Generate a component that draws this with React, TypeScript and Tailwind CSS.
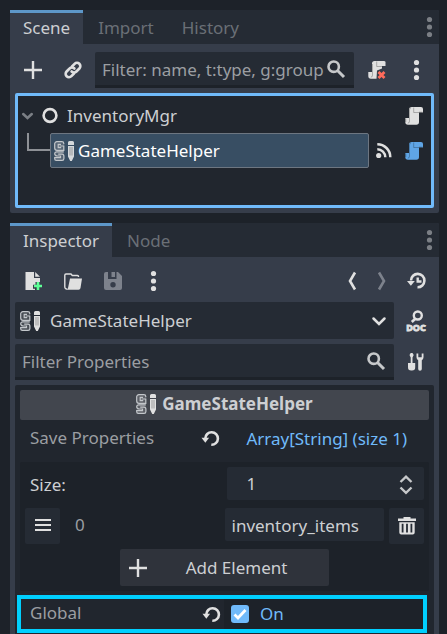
import type { ReactNode } from "react";

type IconProps = { children: ReactNode; className?: string };

function Icon({ children, className = "text-[#e0e0e0]" }: IconProps) {
  return (
    <svg viewBox="0 0 20 20" className={`block h-5 w-5 shrink-0 overflow-visible ${className}`} fill="none" aria-hidden="true">
      {children}
    </svg>
  );
}

const PlusIcon = () => (
  <Icon>
    <path d="M10 1v18M1 10h18" stroke="currentColor" strokeWidth="2.4" />
  </Icon>
);

const LinkIcon = () => (
  <Icon>
    <g stroke="currentColor" strokeWidth="2.6" strokeLinecap="round">
      <path d="M9 6.5l2.6-2.7a3.3 3.3 0 0 1 4.8 4.7l-3 3a3.3 3.3 0 0 1-4.8 0" />
      <path d="M11 13.5l-2.6 2.7a3.3 3.3 0 0 1-4.8-4.7l3-3a3.3 3.3 0 0 1 4.8 0" />
    </g>
  </Icon>
);

const SearchIcon = () => (
  <Icon className="text-[#c6c8ca]">
    <circle cx="7.7" cy="7.7" r="5.2" stroke="currentColor" strokeWidth="2.6" />
    <path d="M11.5 11.5l6.5 6.5" stroke="currentColor" strokeWidth="3" />
  </Icon>
);

const DotsIcon = ({ className }: { className?: string }) => (
  <Icon className={className}>
    <circle cx="10.5" cy="2.5" r="2.6" fill="currentColor" />
    <circle cx="10.5" cy="10" r="2.6" fill="currentColor" />
    <circle cx="10.5" cy="17.5" r="2.6" fill="currentColor" />
  </Icon>
);

const ScriptIcon = ({ className }: { className?: string }) => (
  <Icon className={className}>
    <path
      d="M7.5 1H17a2 2 0 0 1 2 2v3.5h-4V16a2.7 2.7 0 0 1-2.7 2.7H4A2.7 2.7 0 0 1 1.3 16v-4H5V3.5A2.5 2.5 0 0 1 7.5 1z"
      fill="currentColor"
    />
    <path
      d="M9.7 1.5v5H15M7.2 1.5A2.5 2.5 0 0 0 5.5 4v11a2 2 0 0 1-1.7 2.2M1.8 12.5V16M15 6.2h3.6"
      stroke="#000"
      strokeOpacity="0.25"
    />
  </Icon>
);

const ScriptRemoveIcon = () => (
  <Icon>
    <path
      d="M8.5 1H18a1.500 1.500 0 0 1 1.500 2v3H16v2.500l-5 2-.5 8.200H5A2.700 2.700 0 0 1 2.300 16v-4H6V3.500A2.500 2.500 0 0 1 8.500 1z"
      fill="currentColor"
    />
    <path d="M10.700 1.500v5H16M6.500 4v11a2 2 0 0 1-1.700 2.200" stroke="#000" strokeOpacity="0.25" />
    <path d="M12.500 12l6 6M18.500 12l-6 6" stroke="#ff6b5b" strokeWidth="2.8" />
  </Icon>
);

const NodeIcon = () => (
  <Icon>
    <circle cx="10" cy="9.500" r="6.400" stroke="currentColor" strokeWidth="2.600" />
  </Icon>
);

const SignalIcon = () => (
  <Icon>
    <circle cx="4.700" cy="14.500" r="2.600" fill="currentColor" />
    <path d="M3.300 8.200a8 8 0 0 1 8 8M3.300 3.200a13 13 0 0 1 13 13" stroke="currentColor" strokeWidth="2.500" />
  </Icon>
);

const HelperIcon = ({ className = "text-[#e0e0e0]" }: { className?: string }) => (
  <Icon className={className}>
    <rect x="0.500" y="0.500" width="9.500" height="9" rx="2.500" fill="#8b9096" fillOpacity="0.350" />
    <rect x="0.500" y="10.500" width="9.500" height="9" rx="2.500" fill="#8b9096" fillOpacity="0.350" />
    <g stroke="#c3c7cb" strokeWidth="1.200">
      <path d="M9.800 3.200V2.500a2 2 0 0 0-2-1.900H3A2.300 2.300 0 0 0 .7 3v4A2.300 2.300 0 0 0 3 9.300h6.800V5H5.500" />
      <path d="M7 3.300H4.200v3.300h3" />
      <path d="M9.800 10.800H3a2 2 0 0 0-2.300 2c0 1.500 1 2 2.300 2.200h3.500v1.600H.7v1.200A1.600 1.600 0 0 0 2.300 19.400H8a2 2 0 0 0 1.900-2v-2.200a2 2 0 0 0-2-2H4.200" />
    </g>
    <path d="M14 1.500A1.500 1.500 0 0 1 15.500 0h3A1.500 1.500 0 0 1 20 1.500V4h-6zM14 5h6v10.500L17.800 20h-1.600L14 15.500z" fill="currentColor" />
    <path d="M16 6v8.500M18 6v8.500" stroke="#000" strokeOpacity="0.300" />
  </Icon>
);

const NewFileIcon = () => (
  <Icon>
    <path d="M2.500 1H11v6h6v4h-4.500v2.700H10v4h2V19H2.500z" fill="currentColor" />
    <path d="M12.200 1L17 5.800h-4.800z" fill="currentColor" />
    <path d="M15 11v8M11 15h8" stroke="#5fff97" strokeWidth="2.600" />
  </Icon>
);

const FolderIcon = () => (
  <Icon>
    <path d="M15.500 6V5.500a1 1 0 0 0-1-1H9.300L8 3H3a1.200 1.200 0 0 0-1.200 1.200V16A2 2 0 0 0 4 18" stroke="currentColor" strokeWidth="1.400" />
    <path d="M7 7.500h12l-1.500 9.500a2 2 0 0 1-2 1.700h-12c1.300-.7 1.700-2 1.900-3.400z" fill="currentColor" />
  </Icon>
);

const SaveIcon = () => (
  <Icon className="text-[#7d828c]">
    <path
      fillRule="evenodd"
      d="M3 1h2v7h8.500V1H15l4 4v12a2 2 0 0 1-2 2H3a2 2 0 0 1-2-2V3a2 2 0 0 1 2-2zm7 10a2.700 2.700 0 1 0 0 5.400 2.700 2.700 0 0 0 0-5.400z"
      fill="currentColor"
    />
    <path d="M8.500 1H12v5H8.500z" fill="currentColor" />
  </Icon>
);

const BackIcon = () => (
  <Icon>
    <path d="M14 1.500L9 10l5 8.500" stroke="currentColor" strokeWidth="2.600" />
  </Icon>
);

const ForwardIcon = () => (
  <Icon className="text-[#7d828c]">
    <path d="M8 1.500l5 8.500-5 8.500" stroke="currentColor" strokeWidth="2.600" />
  </Icon>
);

const HistoryIcon = () => (
  <Icon>
    <path d="M5 9.500a6.700 6.700 0 1 1 6.500 6.800" stroke="currentColor" strokeWidth="2.600" />
    <path d="M1 10h7.800L4.900 14.800z" fill="currentColor" />
    <path d="M11.700 6.500v4h3.800" stroke="currentColor" strokeWidth="2.400" />
  </Icon>
);

const ReloadIcon = () => (
  <Icon>
    <path d="M4.300 10.500a6.300 6.300 0 1 1 6 6.300" stroke="currentColor" strokeWidth="2.600" />
    <path d="M0.500 9.800h7.600l-3.800 5z" fill="currentColor" />
  </Icon>
);

const DocIcon = () => (
  <Icon>
    <circle cx="11.800" cy="4.500" r="4" stroke="currentColor" strokeWidth="2.400" />
    <path d="M9.500 7.500L5.800 11" stroke="currentColor" strokeWidth="2.600" />
    <text
      x="10"
      y="19.500"
      textAnchor="middle"
      fill="currentColor"
      stroke="currentColor"
      strokeWidth="0.900"
      className="font-['Noto_Sans',sans-serif] text-[9px] font-bold"
    >
      DOC
    </text>
  </Icon>
);

const ToolsIcon = () => (
  <Icon>
    <path d="M4.700 1h1.800l1.200 2-1.200 2.500V11h2.700v4.200a3.200 3.200 0 0 1-3.200 3.300h-.8A3.200 3.200 0 0 1 2 15.200V11h2.700V5.500L3.500 3z" fill="currentColor" />
    <path d="M10.500 1.500v3.700a3.500 3.500 0 0 0 1.700 3V17a1.800 1.800 0 0 0 3.600 0V8.200a3.500 3.500 0 0 0 1.700-3V1.500l-1.800 0v3.700h-3.400V1.500z" fill="currentColor" />
  </Icon>
);

const TrashIcon = () => (
  <Icon>
    <path d="M6.500 1h7v1.500H19V5H1V2.500h5.500z" fill="currentColor" />
    <path
      fillRule="evenodd"
      d="M2.300 6.200h15.400V16.500a2 2 0 0 1-2 2H4.300a2 2 0 0 1-2-2zm2.400 1.600v8.600h1.800V7.800zm4.400 0v8.600h1.800V7.800zm4.400 0v8.600h1.800V7.800z"
      fill="currentColor"
    />
  </Icon>
);

const ListIcon = () => (
  <Icon>
    <path d="M2 4h16M2 9h16M2 14h16" stroke="currentColor" strokeWidth="2" />
  </Icon>
);

const ChevronDown = () => (
  <Icon>
    <path d="M4.500 7.500L10 13l5.500-5.500" stroke="currentColor" strokeWidth="2.500" strokeLinecap="round" />
  </Icon>
);

const TreeArrow = () => (
  <Icon className="text-[#7b7f85]">
    <path d="M5.200 8L9.500 12l4.300-4" stroke="currentColor" strokeWidth="2.500" strokeLinecap="round" />
  </Icon>
);

const StepperIcon = () => (
  <Icon className="text-[#c6c8ca]">
    <path d="M4.500 8L10 2.700 15.500 8M4.500 13.500L10 18.800l5.500-5.300" stroke="currentColor" strokeWidth="2.400" />
  </Icon>
);

function ToolButton({ label, children, narrow = false }: { label: string; children: ReactNode; narrow?: boolean }) {
  return (
    <button
      type="button"
      aria-label={label}
      className={`flex h-9 shrink-0 items-center justify-center ${narrow ? "w-[26px]" : "w-9"}`}
    >
      {children}
    </button>
  );
}

function FilterBox({ label, placeholder }: { label: string; placeholder: string }) {
  return (
    <label className="flex h-9 min-w-0 flex-1 items-center rounded-t-xs border-b-3 border-[#1d2229] bg-[#252b34] pr-2 pl-[7px]">
      <input
        type="text"
        aria-label={label}
        placeholder={placeholder}
        className="w-full min-w-0 flex-1 bg-transparent pt-0.5 placeholder:text-[#9b9ea2] focus:outline-none"
      />
      <SearchIcon />
    </label>
  );
}

function TabBar({ tabs }: { tabs: string[] }) {
  return (
    <div className="flex h-[34px] items-stretch rounded-t-xs bg-[#252b34]">
      <div role="tablist" className="flex gap-0.5">
        {tabs.map((tab, index) => (
          <button
            key={tab}
            type="button"
            role="tab"
            aria-selected={index === 0}
            className={
              index === 0
                ? "border-t-3 border-[#5d97c9] bg-[#363d4a] px-[13px] pb-px text-[#cdcfd2]"
                : "px-[13px] pt-0.5 text-[#6a6f76]"
            }
          >
            {tab}
          </button>
        ))}
      </div>
      <button type="button" aria-label="Dock options" className="ml-auto flex w-5 items-center justify-center">
        <DotsIcon className="text-[#7b7f85]" />
      </button>
    </div>
  );
}

function SceneDock() {
  return (
    <section className="rounded-xs bg-[#363d4a]">
      <TabBar tabs={["Scene", "Import", "History"]} />
      <div className="px-[5px] pt-2 pb-[5px]">
        <div className="flex items-center gap-1">
          <ToolButton label="Add node">
            <PlusIcon />
          </ToolButton>
          <ToolButton label="Instantiate scene">
            <LinkIcon />
          </ToolButton>
          <FilterBox label="Filter nodes" placeholder="Filter: name, t:type, g:group" />
          <ToolButton label="Detach script">
            <ScriptRemoveIcon />
          </ToolButton>
          <ToolButton label="More scene options">
            <DotsIcon />
          </ToolButton>
        </div>
        <ul role="tree" aria-label="Scene tree" className="mt-[5px] rounded-xs border-3 border-[#70bafa] bg-[#21262e] pt-0.5 pr-[7px] pb-[37px]">
          <li role="treeitem" aria-expanded="true" aria-selected="false">
            <div className="flex h-[35px] items-center">
              <TreeArrow />
              <span className="ml-0.5">
                <NodeIcon />
              </span>
              <span className="ml-[7px] flex-1">InventoryMgr</span>
              <button type="button" aria-label="Open script">
                <ScriptIcon />
              </button>
            </div>
            <ul role="group">
              <li role="treeitem" aria-selected="true" className="flex h-[35px] items-center">
                <span className="ml-[9px] h-[18px] w-[23px] self-start border-b-2 border-l-2 border-[#8e9196]" />
                <div className="flex h-full min-w-0 flex-1 items-center gap-1 rounded-xs border border-[#6d7681] bg-[#384e63] pl-[3px] text-white">
                  <HelperIcon className="text-[#d5d9dc]" />
                  <span className="truncate">GameStateHelper</span>
                </div>
                <button type="button" aria-label="Signals" className="ml-[5px]">
                  <SignalIcon />
                </button>
                <button type="button" aria-label="Open helper script" className="ml-2.5">
                  <ScriptIcon className="text-[#5fa5e6]" />
                </button>
              </li>
            </ul>
          </li>
        </ul>
      </div>
    </section>
  );
}

function InspectorDock() {
  return (
    <section className="flex flex-1 flex-col rounded-t-xs bg-[#363d4a]">
      <TabBar tabs={["Inspector", "Node"]} />
      <div className="flex flex-1 flex-col px-[5px] pt-1.5">
        <div className="flex gap-1">
          <ToolButton label="New resource">
            <NewFileIcon />
          </ToolButton>
          <ToolButton label="Load resource">
            <FolderIcon />
          </ToolButton>
          <ToolButton label="Save resource">
            <SaveIcon />
          </ToolButton>
          <ToolButton label="Resource options">
            <DotsIcon />
          </ToolButton>
          <div className="ml-auto flex gap-1">
            <ToolButton label="Previous object" narrow>
              <BackIcon />
            </ToolButton>
            <ToolButton label="Next object" narrow>
              <ForwardIcon />
            </ToolButton>
            <ToolButton label="Object history">
              <HistoryIcon />
            </ToolButton>
          </div>
        </div>

        <div className="mt-[3px] flex items-center gap-1">
          <div className="relative min-w-0 flex-1">
            <select
              aria-label="Edited object"
              className="block h-[37px] w-full appearance-none rounded-xs bg-[#252b34] pr-9 pl-[35px] text-[#cdcfd2]"
            >
              <option>GameStateHelper</option>
            </select>
            <span className="pointer-events-none absolute inset-y-0 left-[5px] flex items-center">
              <HelperIcon />
            </span>
            <span className="pointer-events-none absolute inset-y-0 right-[5px] flex items-center">
              <ChevronDown />
            </span>
          </div>
          <ToolButton label="Open documentation">
            <DocIcon />
          </ToolButton>
        </div>

        <div className="mt-[5px] flex items-center gap-1">
          <FilterBox label="Filter properties" placeholder="Filter Properties" />
          <ToolButton label="Property tools">
            <ToolsIcon />
          </ToolButton>
        </div>

        <div className="mt-[5px] flex-1 rounded-t-xs bg-[#21262e] px-[5px] pt-[5px]">
          <h2 className="flex h-[30px] items-center justify-center gap-1.5 rounded-xs bg-[#42464e] pb-0.5 font-bold">
            <HelperIcon />
            GameStateHelper
          </h2>

          <div className="grid h-9 grid-cols-2 items-center">
            <div className="flex items-center justify-between pr-1 pl-2.5">
              <span className="text-[#9b9ea2]">Save Properties</span>
              <button type="button" aria-label="Revert save properties">
                <ReloadIcon />
              </button>
            </div>
            <button type="button" className="pt-0.5 text-[#70bafa]">
              Array[String] (size 1)
            </button>
          </div>

          <div className="mt-1.5 rounded-xs bg-[#1d2229] p-[5px]">
            <div className="grid grid-cols-2 items-center">
              <label htmlFor="array-size" className="pt-0.5 pl-[5px]">
                Size:
              </label>
              <div className="ml-0.5 flex h-[33px] items-center rounded-xs bg-[#252b34] pr-2 pl-5">
                <input id="array-size" type="text" inputMode="numeric" defaultValue="1" className="w-full min-w-0 flex-1 bg-transparent" />
                <StepperIcon />
              </div>
            </div>

            <div className="mt-2 grid grid-cols-2">
              <div className="flex items-center">
                <button type="button" aria-label="Reorder element" className="flex h-9 w-[35px] items-center justify-center rounded-xs bg-[#252b34]">
                  <ListIcon />
                </button>
                <label htmlFor="element-0" className="ml-[15px] pb-0.5 text-[#9b9ea2]">
                  0
                </label>
              </div>
              <div className="flex items-start gap-[5px]">
                <input
                  id="element-0"
                  type="text"
                  defaultValue="inventory_items"
                  className="h-[33px] w-full min-w-0 flex-1 rounded-xs bg-[#252b34] px-[7px] pt-0.5"
                />
                <button type="button" aria-label="Remove element" className="flex h-9 w-[35px] items-center justify-center rounded-xs bg-[#252b34]">
                  <TrashIcon />
                </button>
              </div>
            </div>

            <button type="button" className="mx-auto mt-[5px] flex h-[37px] w-[209px] items-center rounded-xs bg-[#2f333b] px-2">
              <PlusIcon />
              <span className="flex-1 pl-1 text-center">Add Element</span>
            </button>
          </div>

          <div className="mt-1 mr-0.5 -ml-[3px] grid h-[38px] grid-cols-2 border-4 border-[#00d0ff]">
            <div className="flex items-center justify-between pl-[9px]">
              <label htmlFor="global" className="pb-0.5 text-[#9b9ea2]">
                Global
              </label>
              <button type="button" aria-label="Revert global">
                <ReloadIcon />
              </button>
            </div>
            <label className="ml-0.5 flex items-center gap-[11px] bg-[#1d2229] pl-[7px] text-[#70bafa]">
              <span className="grid">
                <input
                  id="global"
                  type="checkbox"
                  defaultChecked
                  className="peer col-start-1 row-start-1 h-[18px] w-[18px] appearance-none rounded-[3px] bg-[#3a414c] checked:bg-[#70bafa]"
                />
                <svg
                  viewBox="0 0 18 18"
                  fill="none"
                  aria-hidden="true"
                  className="pointer-events-none invisible col-start-1 row-start-1 h-[18px] w-[18px] text-white peer-checked:visible"
                >
                  <path d="M3.500 9.500l3.500 3.500 7.500-8" stroke="currentColor" strokeWidth="2.800" />
                </svg>
              </span>
              On
            </label>
          </div>
        </div>
      </div>
    </section>
  );
}

export default function App() {
  return (
    <main className="flex min-h-screen flex-col gap-2.5 bg-[#1d2229] pt-2.5 pr-2 pl-2.5 font-['Noto_Sans',sans-serif] text-[17px] leading-6 text-[#cdcfd2]">
      <SceneDock />
      <InspectorDock />
    </main>
  );
}
